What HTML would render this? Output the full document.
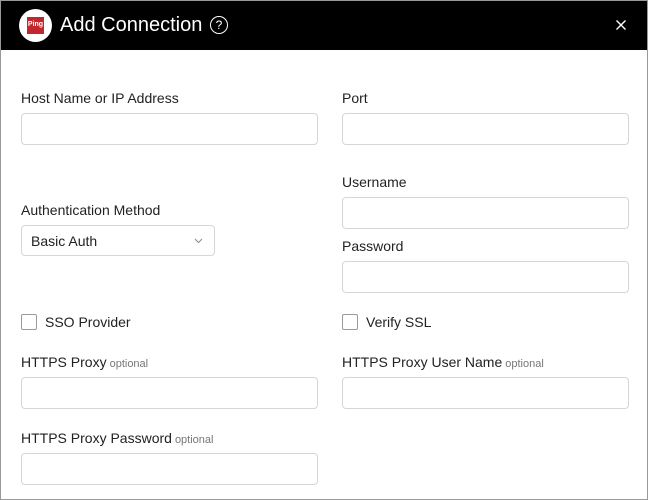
<!DOCTYPE html>
<html><head><style>
*{box-sizing:border-box;margin:0;padding:0}
html,body{width:648px;height:500px;overflow:hidden;background:#fff;font-family:"Liberation Sans",sans-serif}
.frame{position:absolute;left:0;top:0;width:648px;height:500px;border:1px solid #999}
.hdr{position:absolute;left:1px;top:1px;width:646px;height:49px;background:#000}
.logo{position:absolute;left:18px;top:8px;width:33px;height:33px;border-radius:50%;background:#fff}
.logo i{position:absolute;left:8px;top:8px;width:17px;height:17px;background:#c1272d;color:#fff;font-style:normal;font-size:7px;font-weight:bold;text-align:center;line-height:15px}
.title{position:absolute;left:59px;top:12px;color:#fff;font-size:20px;line-height:24px}
.help{position:absolute;left:209px;top:15px;width:18px;height:18px;border:1.3px solid #fff;border-radius:50%;color:#fff;font-size:12px;text-align:center;line-height:16px}
.x{position:absolute;left:614px;top:18px}
.l{position:absolute;font-size:14px;color:#222;line-height:16px}
.l small{font-size:11px;color:#777;margin-left:3px}
.in{position:absolute;height:32px;border:1px solid #d6d6d6;border-radius:4px;background:#fff}
.cb{position:absolute;width:16px;height:16px;border:1px solid #999;border-radius:2px}
</style></head><body>
<div class="frame"></div>
<div class="hdr">
<div class="logo"><i>Ping</i></div>
<div class="title">Add Connection</div>
<div class="help">?</div>
<svg class="x" width="12" height="12" viewBox="0 0 12 12"><path d="M1.5 1.5L10.5 10.5M10.5 1.5L1.5 10.5" stroke="#fff" stroke-width="1.4"/></svg>
</div>

<div class="l" style="left:21px;top:90px">Host Name or IP Address</div>
<div class="in" style="left:21px;top:113px;width:297px"></div>
<div class="l" style="left:342px;top:90px">Port</div>
<div class="in" style="left:342px;top:113px;width:287px"></div>

<div class="l" style="left:342px;top:174px">Username</div>
<div class="in" style="left:342px;top:197px;width:287px"></div>
<div class="l" style="left:21px;top:202px">Authentication Method</div>
<div class="in" style="left:21px;top:225px;width:194px;height:31px"><span style="position:absolute;left:9px;top:7px;font-size:14px;color:#222">Basic Auth</span>
<svg style="position:absolute;left:172px;top:12px" width="9" height="6" viewBox="0 0 9 6"><path d="M1 1L4.5 4.5L8 1" stroke="#888" fill="none" stroke-width="1"/></svg></div>
<div class="l" style="left:342px;top:238px">Password</div>
<div class="in" style="left:342px;top:261px;width:287px"></div>

<div class="cb" style="left:21px;top:314px"></div>
<div class="l" style="left:45px;top:314px">SSO Provider</div>
<div class="cb" style="left:342px;top:314px"></div>
<div class="l" style="left:366px;top:314px">Verify SSL</div>

<div class="l" style="left:21px;top:354px">HTTPS Proxy<small>optional</small></div>
<div class="in" style="left:21px;top:377px;width:297px"></div>
<div class="l" style="left:342px;top:354px">HTTPS Proxy User Name<small>optional</small></div>
<div class="in" style="left:342px;top:377px;width:287px"></div>

<div class="l" style="left:21px;top:430px">HTTPS Proxy Password<small>optional</small></div>
<div class="in" style="left:21px;top:453px;width:297px"></div>
</body></html>
